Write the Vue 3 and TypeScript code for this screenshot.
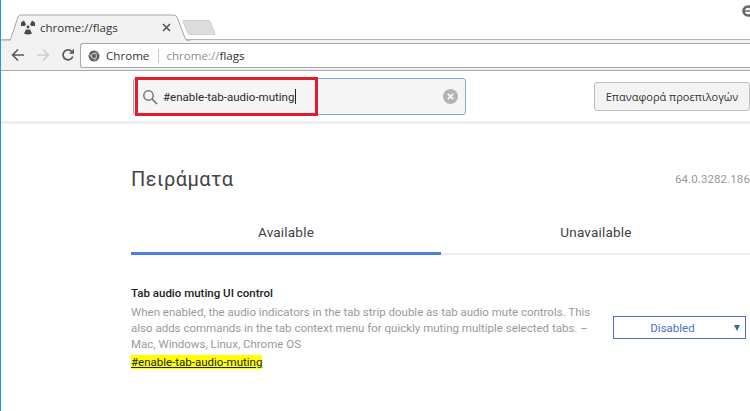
<script setup lang="ts">
const description =
  'When enabled, the audio indicators in the tab strip double as tab audio mute controls. This also adds commands in the tab context menu for quickly muting multiple selected tabs. – Mac, Windows, Linux, Chrome OS'
</script>

<template>
  <div class="window">
    <div class="tabstrip">
      <div class="tab">
        <svg class="tab-shape" width="190" height="27" viewBox="0 0 190 27">
          <path d="M0 27H7Q9 27 10 24L17 3Q18 1 20 1H173Q175 1 176 3L184 24Q185 27 188 27H190" fill="#f2f2f2" stroke="#a6a6a6" />
        </svg>
        <svg class="favicon" width="16" height="16" viewBox="0 0 16 16">
          <path d="M1 3.5 4 1.5 6 5.5 4.5 7H1Z M15 3.5 12 1.5 10 5.5 11.500 7H15Z M6 10.500H10L12 14.500Q8 16.500 4 14.500Z" fill="#4a4a4a" />
          <circle cx="8" cy="8" r="1.400" fill="#4a4a4a" />
        </svg>
        <span class="tab-title">chrome://flags</span>
        <svg class="tab-close" width="9" height="9" viewBox="0 0 9 9">
          <path d="M1 1 8 8M8 1 1 8" stroke="#555" stroke-width="1.600" />
        </svg>
      </div>
      <div class="new-tab"></div>
      <svg class="profile" width="10" height="12" viewBox="0 0 10 12">
        <circle cx="6" cy="6" r="4.500" fill="none" stroke="#666" stroke-width="2.600" />
        <path d="M2 6H10" stroke="#666" stroke-width="1.500" />
      </svg>
    </div>

    <div class="toolbar">
      <svg class="nav" width="14" height="14" viewBox="0 0 14 14">
        <path d="M13 7H2M7 1.500 1.500 7 7 12.500" fill="none" stroke="#5a5a5a" stroke-width="1.600" />
      </svg>
      <svg class="nav" width="14" height="14" viewBox="0 0 14 14">
        <path d="M1 7H12M7 1.500 12.500 7 7 12.500" fill="none" stroke="#cfcfcf" stroke-width="1.600" />
      </svg>
      <svg class="nav" width="14" height="14" viewBox="0 0 14 14">
        <path d="M11.800 8.500A5 5 0 1 1 10.600 3.300" fill="none" stroke="#5a5a5a" stroke-width="1.700" />
        <path d="M8 5.800H13V0.800Z" fill="#5a5a5a" />
      </svg>
      <div class="omnibox">
        <svg class="chrome-icon" width="12" height="12" viewBox="0 0 12 12">
          <circle cx="6" cy="6" r="5.500" fill="#5f5f5f" />
          <circle cx="6" cy="6" r="2.600" fill="#5f5f5f" stroke="#d8d8d8" stroke-width="0.900" />
          <path d="M6 3H11M3.500 7.500 1.300 3.500M8.500 7.500 6 11.500" stroke="#d8d8d8" stroke-width="0.700" />
        </svg>
        <span class="site-name">Chrome</span>
        <span class="divider"></span>
        <span class="url"><span class="url-scheme">chrome://</span>flags</span>
      </div>
    </div>

    <header class="search-bar">
      <div class="search-box">
        <svg class="search-icon" width="16" height="16" viewBox="0 0 16 16">
          <circle cx="6.500" cy="6.500" r="4.700" fill="none" stroke="#757575" stroke-width="1.500" />
          <path d="M10 10 15 15" stroke="#757575" stroke-width="1.700" />
        </svg>
        <span class="search-text">#enable-tab-audio-muting</span>
        <span class="caret"></span>
        <svg class="clear-icon" width="15" height="15" viewBox="0 0 15 15">
          <circle cx="7.500" cy="7.500" r="7.500" fill="#b3b3b3" />
          <path d="M4.800 4.800 10.200 10.200M10.200 4.800 4.800 10.200" stroke="#f5f5f5" stroke-width="1.800" />
        </svg>
        <div class="highlight-box"></div>
      </div>
      <button class="reset-button">Επαναφορά προεπιλογών</button>
    </header>

    <main class="content">
      <div class="title-row">
        <h1>Πειράματα</h1>
        <span class="version">64.0.3282.186</span>
      </div>

      <div class="tabs">
        <div class="flag-tab active">Available</div>
        <div class="flag-tab">Unavailable</div>
      </div>

      <section class="experiment">
        <div class="experiment-text">
          <h2>Tab audio muting UI control</h2>
          <p>{{ description }}</p>
          <a class="permalink">#enable-tab-audio-muting</a>
        </div>
        <div class="select">
          <span>Disabled</span>
          <i class="select-arrow"></i>
        </div>
      </section>
    </main>
  </div>
</template>

<style>
html,
body {
  margin: 0;
  background: #fff;
  overflow: hidden;
}
</style>

<style scoped>
.window {
  width: 750px;
  height: 411px;
  box-sizing: border-box;
  border-left: 1px solid #2196e8;
  overflow: hidden;
  font-family: Roboto, "Noto Sans", sans-serif;
  background: #fff;
}

.tabstrip {
  height: 40px;
  box-sizing: border-box;
  padding-top: 14px;
  display: flex;
  align-items: flex-start;
  position: relative;
}

.profile {
  position: absolute;
  right: -2px;
  top: 5px;
}

.tab {
  width: 190px;
  height: 26px;
  box-sizing: border-box;
  position: relative;
  display: flex;
  align-items: center;
  padding: 0 0 0 19px;
}

.tab-shape {
  position: absolute;
  left: 0;
  top: 0;
}

.favicon,
.tab-title,
.tab-close {
  position: relative;
}

.tab-title {
  margin-left: 4px;
  width: 122px;
  font: 11.5px "Open Sans", sans-serif;
  color: #333;
}

.new-tab {
  width: 26px;
  height: 13px;
  margin: 6px 0 0 -6px;
  background: #dcdcdc;
  border: 1px solid #cfcfcf;
  border-radius: 2px;
  transform: skewX(22deg);
}

.toolbar {
  height: 32px;
  box-sizing: border-box;
  background: #f2f2f2;
  border-bottom: 1px solid #a8a8a8;
  display: flex;
  align-items: center;
  padding-left: 10px;
  margin-top: -1px;
  margin-bottom: 1px;
  border-top: 1px solid #b5b5b5;
}

.nav {
  margin-right: 11px;
  flex: none;
}

.omnibox {
  margin-left: -6px;
  flex: 1;
  height: 25px;
  box-sizing: border-box;
  background: #fff;
  border: 1px solid #a8a8a8;
  border-right: 0;
  border-radius: 3px 0 0 3px;
  display: flex;
  align-items: center;
  padding-left: 7px;
  margin-top: 1px;
}

.chrome-icon {
  flex: none;
}

.site-name {
  margin-left: 6px;
  font: 11.600px "Open Sans", sans-serif;
  color: #333;
}

.divider {
  width: 1px;
  height: 14px;
  background: #c4c4c4;
  margin: 0 7px 0 9px;
}

.url {
  font: 11.600px "Open Sans", sans-serif;
  color: #333;
}

.url-scheme {
  color: #8c8c8c;
}

.search-bar {
  height: 52px;
  box-sizing: border-box;
  border-bottom: 3px solid #f0f0f0;
  display: flex;
  align-items: flex-start;
  padding-left: 132px;
  position: relative;
}

.search-box {
  width: 333px;
  height: 37px;
  margin-top: 6px;
  box-sizing: border-box;
  background: #f5f5f5;
  border: 1px solid #85a5e0;
  border-radius: 3px;
  display: flex;
  align-items: center;
  padding: 0 7px 0 8px;
  position: relative;
}

.search-text {
  margin-left: 5px;
  font-size: 11.500px;
  color: #2b2b2b;
}

.caret {
  width: 1px;
  height: 15px;
  background: #222;
  margin-left: 1px;
}

.clear-icon {
  margin-left: auto;
}

.highlight-box {
  position: absolute;
  left: 1px;
  top: -2px;
  width: 183px;
  height: 39px;
  box-sizing: border-box;
  border: 3px solid #e21b2d;
}

.reset-button {
  width: 156px;
  height: 29px;
  margin: 10px 0 0 128px;
  box-sizing: border-box;
  padding: 0;
  background: #f3f3f3;
  border: 1px solid #bdbdbd;
  border-radius: 3px;
  font: 11px "Open Sans", sans-serif;
  color: #333;
}

.content {
  padding-left: 130px;
}

.title-row {
  display: flex;
  align-items: center;
  justify-content: space-between;
  height: 34px;
  margin-top: 38px;
}

h1 {
  margin: 0;
  font-size: 20px;
  font-weight: 400;
  letter-spacing: 0.45px;
  color: #444;
}

.version {
  font-size: 11.500px;
  letter-spacing: 0.1px;
  color: #999;
  white-space: nowrap;
}

.tabs {
  display: flex;
  margin-top: 17px;
  margin-right: -1px;
}

.flag-tab {
  height: 42px;
  box-sizing: border-box;
  flex: 0 0 310px;
  display: flex;
  align-items: center;
  justify-content: center;
  padding-bottom: 2px;
  font-size: 13.500px;
  letter-spacing: 0.2px;
  color: #3c4043;
  border-bottom: 2px solid #eee;
}

.flag-tab.active {
  border-bottom: 3px solid #4a7fdc;
}

.experiment {
  display: flex;
  align-items: flex-start;
  margin-top: 30px;
}

.experiment-text {
  width: 465px;
  flex: none;
}

h2 {
  margin: 0;
  font-size: 11.500px;
  line-height: 16px;
  font-weight: 500;
  color: #222;
}

p {
  margin: 3px 0 0;
  font-size: 11.500px;
  line-height: 16px;
  color: #999;
}

.permalink {
  display: block;
  width: fit-content;
  margin-top: 3px;
  font-size: 11.500px;
  line-height: 14px;
  color: #222;
  background: #ffff00;
  text-decoration: underline;
}

.select {
  width: 133px;
  height: 23px;
  box-sizing: border-box;
  margin: 31px 0 0 17px;
  padding-right: 14px;
  border: 1px solid #4a70c9;
  display: flex;
  align-items: center;
  justify-content: center;
  font-size: 11.500px;
  color: #4a70c9;
  position: relative;
}

.select-arrow {
  position: absolute;
  right: 5px;
  top: 8px;
  width: 0;
  height: 0;
  border-left: 3.500px solid transparent;
  border-right: 3.500px solid transparent;
  border-top: 6px solid #3c5fb0;
}
</style>
